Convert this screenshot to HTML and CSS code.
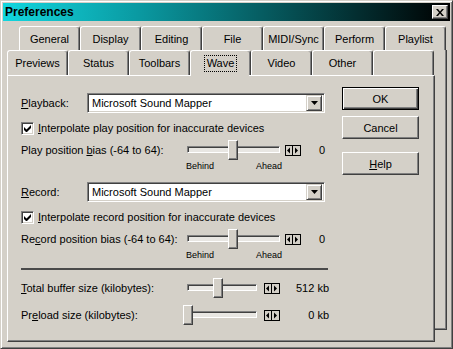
FILE: index.html
```html
<!DOCTYPE html>
<html>
<head>
<meta charset="utf-8">
<title>Preferences</title>
<link rel="stylesheet" href="styles.css">
</head>
<body>
<div class="window">
  <div class="titlebar">
    <span class="title">Preferences</span>
    <span class="close"><svg width="8" height="7" viewBox="0 0 8 7"><path d="M0 0h2l2 2.5L6 0h2L5 3.5 8 7H6L4 4.5 2 7H0l3-3.5z" fill="#000"/></svg></span>
  </div>
  <div class="tabctl">
    <div class="tabrow back">
      <div class="tab">General</div>
      <div class="tab">Display</div>
      <div class="tab">Editing</div>
      <div class="tab">File</div>
      <div class="tab">MIDI/Sync</div>
      <div class="tab">Perform</div>
      <div class="tab">Playlist</div>
    </div>
    <div class="lower">
      <div class="col">
        <div class="tabrow front">
          <div class="tab">Previews</div>
          <div class="tab">Status</div>
          <div class="tab">Toolbars</div>
          <div class="tab selected"><span class="focus">Wave</span></div>
          <div class="tab">Video</div>
          <div class="tab">Other</div>
          <div class="tab"></div>
        </div>
        <div class="panel">
          <div class="form">
            <div class="row combo-row first">
              <span class="lbl-short"><u>P</u>layback:</span>
              <div class="combo"><span class="combo-text">Microsoft Sound Mapper</span><span class="drop"><svg width="7" height="4" viewBox="0 0 7 4"><path d="M0 0h7L3.5 4z" fill="#000"/></svg></span></div>
            </div>
            <div class="row check-row">
              <span class="check"><svg width="7" height="7" viewBox="0 0 7 7"><path d="M0 2v3l2 2h1l4-4V0L2.5 4.5z" fill="#000"/></svg></span>
              <span><u>I</u>nterpolate play position for inaccurate devices</span>
            </div>
            <div class="row slider-row after-check">
              <span class="lbl-long">Play position <u>b</u>ias (-64 to 64):</span>
              <div class="slider wide"><div class="track"></div><div class="thumb" style="left:45px"></div></div>
              <span class="spin near"><svg width="16" height="11" viewBox="0 0 16 11"><rect x="0.5" y="0.5" width="15" height="10" fill="#d4d0c8" stroke="#000"/><path d="M7.5 0v11" stroke="#000"/><path d="M5 2.5v6L2 5.5z M10 2.5v6l3-3z" fill="#000"/></svg></span>
              <span class="value inset">0</span>
            </div>
            <div class="row scale-row">
              <span class="scale"><span>Behind</span><span>Ahead</span></span>
            </div>
            <div class="row combo-row after-scale">
              <span class="lbl-short"><u>R</u>ecord:</span>
              <div class="combo"><span class="combo-text">Microsoft Sound Mapper</span><span class="drop"><svg width="7" height="4" viewBox="0 0 7 4"><path d="M0 0h7L3.5 4z" fill="#000"/></svg></span></div>
            </div>
            <div class="row check-row">
              <span class="check"><svg width="7" height="7" viewBox="0 0 7 7"><path d="M0 2v3l2 2h1l4-4V0L2.5 4.5z" fill="#000"/></svg></span>
              <span><u>I</u>nterpolate record position for inaccurate devices</span>
            </div>
            <div class="row slider-row after-check">
              <span class="lbl-long">Re<u>c</u>ord position bias (-64 to 64):</span>
              <div class="slider wide"><div class="track"></div><div class="thumb" style="left:45px"></div></div>
              <span class="spin near"><svg width="16" height="11" viewBox="0 0 16 11"><rect x="0.5" y="0.5" width="15" height="10" fill="#d4d0c8" stroke="#000"/><path d="M7.5 0v11" stroke="#000"/><path d="M5 2.5v6L2 5.5z M10 2.5v6l3-3z" fill="#000"/></svg></span>
              <span class="value inset">0</span>
            </div>
            <div class="row scale-row">
              <span class="scale"><span>Behind</span><span>Ahead</span></span>
            </div>
            <div class="separator"></div>
            <div class="row slider-row after-sep">
              <span class="lbl-long"><u>T</u>otal buffer size (kilobytes):</span>
              <div class="slider narrow"><div class="track"></div><div class="thumb" style="left:30px"></div></div>
              <span class="spin far"><svg width="16" height="11" viewBox="0 0 16 11"><rect x="0.5" y="0.5" width="15" height="10" fill="#d4d0c8" stroke="#000"/><path d="M7.5 0v11" stroke="#000"/><path d="M5 2.5v6L2 5.5z M10 2.5v6l3-3z" fill="#000"/></svg></span>
              <span class="value">512 kb</span>
            </div>
            <div class="row slider-row after-slider">
              <span class="lbl-long">Pr<u>e</u>load size (kilobytes):</span>
              <div class="slider narrow"><div class="track"></div><div class="thumb" style="left:0px"></div></div>
              <span class="spin far"><svg width="16" height="11" viewBox="0 0 16 11"><rect x="0.5" y="0.5" width="15" height="10" fill="#d4d0c8" stroke="#000"/><path d="M7.5 0v11" stroke="#000"/><path d="M5 2.5v6L2 5.5z M10 2.5v6l3-3z" fill="#000"/></svg></span>
              <span class="value">0 kb</span>
            </div>
          </div>
          <div class="buttons">
            <div class="btn default">OK</div>
            <div class="btn cancel">Cancel</div>
            <div class="btn help"><span><u>H</u>elp</span></div>
          </div>
        </div>
      </div>
      <div class="strip"></div>
    </div>
  </div>
</div>
</body>
</html>
```

FILE: styles.css
```css
* { box-sizing: border-box; }
html, body { margin: 0; padding: 0; }
body {
  width: 453px;
  height: 349px;
  overflow: hidden;
  background: #d4d0c8;
  font-family: "Liberation Sans", Arial, sans-serif;
  font-size: 11px;
  color: #000;
}
.window {
  width: 453px;
  height: 349px;
  padding: 2px;
  background: #d4d0c8;
  border: 1px solid;
  border-color: #d4d0c8 #404040 #404040 #d4d0c8;
  box-shadow: inset 1px 1px #fff, inset -1px -1px #808080;
}
.titlebar {
  height: 18px;
  display: flex;
  align-items: center;
  justify-content: space-between;
  padding: 0 2px 0 2px;
  background: linear-gradient(90deg, #12d6de 0%, #0a9aa2 30%, #000 100%);
}
.title { font-weight: bold; font-size: 12px; color: #000; }
.close {
  width: 16px;
  height: 14px;
  display: flex;
  align-items: center;
  justify-content: center;
  background: #d4d0c8;
  border: 1px solid;
  border-color: #fff #404040 #404040 #fff;
  box-shadow: inset -1px -1px #808080;
}
.tabctl { margin: 5px 0 0 4px; }
.tabrow { display: flex; }
.tabrow.back { height: 24px; padding-left: 12px; }
.tabrow.front { height: 25px; }
.tab {
  position: relative;
  flex: none;
  width: 61px;
  display: flex;
  align-items: center;
  justify-content: center;
  border: 1px solid;
  border-bottom: none;
  border-color: #fff #404040 transparent #fff;
  box-shadow: inset -1px 0 #808080;
  border-radius: 3px 3px 0 0;
  background: #d4d0c8;
}
.tab.selected { z-index: 1; }
.tab.selected::after {
  content: "";
  position: absolute;
  left: 0;
  right: 1px;
  bottom: -1px;
  height: 1px;
  background: #d4d0c8;
}
.focus { outline: 1px dotted #000; outline-offset: 0; padding: 1px 2px 2px; }
.lower { display: flex; }
.col { width: 428px; flex: none; }
.panel {
  height: 267px;
  display: flex;
  border: 1px solid;
  border-color: #fff #404040 #404040 #fff;
  box-shadow: inset -1px -1px #808080;
}
.strip {
  width: 12px;
  height: 280px;
  flex: none;
  border-right: 1px solid #404040;
  border-bottom: 1px solid #404040;
  box-shadow: inset -1px -1px #808080;
}
.form { width: 308px; margin-left: 13px; display: flex; flex-direction: column; }
.row { display: flex; align-items: center; flex: none; }
.combo-row { height: 20px; }
.combo-row.first { margin-top: 17px; }
.combo-row.after-scale { margin-top: 11px; }
.check-row { height: 16px; margin-top: 7px; }
.slider-row { height: 20px; }
.slider-row.after-check { margin-top: 4px; }
.slider-row.after-sep { margin-top: 8px; }
.slider-row.after-slider { margin-top: 7px; }
.scale-row { height: 11px; font-size: 9px; }
.lbl-short { width: 66px; flex: none; }
.lbl-long { width: 162px; flex: none; }
.combo {
  width: 238px;
  height: 20px;
  display: flex;
  align-items: center;
  padding: 2px;
  background: #fff;
  border: 1px solid;
  border-color: #808080 #fff #fff #808080;
  box-shadow: inset 1px 1px #404040, inset -1px -1px #d4d0c8;
}
.combo-text { flex: 1; padding-left: 2px; }
.drop {
  width: 16px;
  height: 16px;
  display: flex;
  align-items: center;
  justify-content: center;
  background: #d4d0c8;
  border: 1px solid;
  border-color: #d4d0c8 #404040 #404040 #d4d0c8;
  box-shadow: inset 1px 1px #fff, inset -1px -1px #808080;
}
.check {
  width: 13px;
  height: 13px;
  margin-right: 4px;
  display: flex;
  align-items: center;
  justify-content: center;
  background: #fff;
  border: 1px solid;
  border-color: #808080 #fff #fff #808080;
  box-shadow: inset 1px 1px #404040, inset -1px -1px #d4d0c8;
}
.slider { position: relative; height: 20px; flex: none; }
.slider.wide { width: 101px; }
.slider.narrow { width: 78px; }
.track {
  margin: 6px 4px 0;
  height: 7px;
  background: #e8e6e2;
  border: 1px solid;
  border-color: #808080 #fff #fff #808080;
  box-shadow: inset 1px 1px #404040;
}
.thumb {
  position: absolute;
  top: 0;
  width: 10px;
  height: 20px;
  background: #d4d0c8;
  border: 1px solid;
  border-color: #fff #404040 #404040 #fff;
  box-shadow: inset -1px -1px #808080;
}
.spin { display: flex; flex: none; }
.spin.near { margin-left: 1px; }
.spin.far { margin-left: 3px; }
.value { flex: 1; text-align: right; }
.value.inset { margin-right: 4px; }
.scale {
  margin-left: 165px;
  width: 96px;
  display: flex;
  justify-content: space-between;
}
.separator {
  flex: none;
  height: 2px;
  margin-top: 8px;
  width: 307px;
  background: #4a4a4a;
}
.buttons {
  width: 77px;
  margin-left: 13px;
  padding-top: 11px;
  display: flex;
  flex-direction: column;
}
.btn {
  width: 77px;
  height: 23px;
  display: flex;
  align-items: center;
  justify-content: center;
  background: #d4d0c8;
  border: 1px solid;
  border-color: #fff #404040 #404040 #fff;
  box-shadow: inset -1px -1px #808080;
}
.btn.default {
  border-color: #000;
  box-shadow: inset 1px 1px #fff, inset -1px -1px #404040, inset -2px -2px #808080;
}
.btn.cancel { margin-top: 6px; }
.btn.help { margin-top: 13px; }
```
